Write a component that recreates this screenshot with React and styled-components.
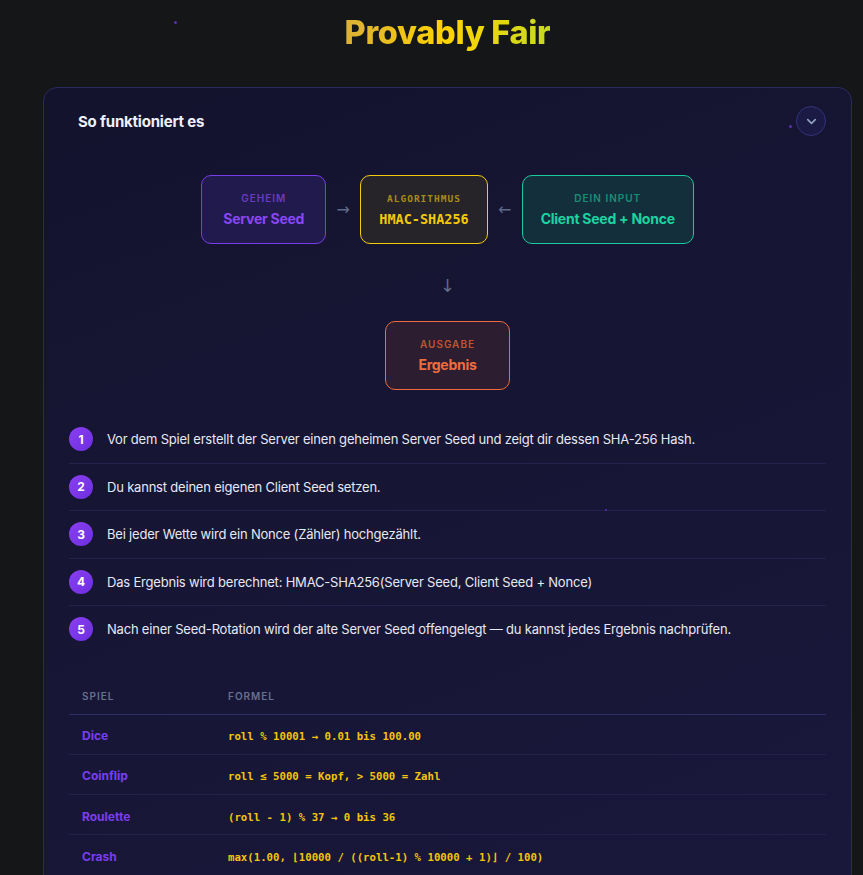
import React from "react";
import styled, { createGlobalStyle } from "styled-components";
import { ChevronDown } from "lucide-react";

const GlobalStyle = createGlobalStyle`
  html, body {
    margin: 0;
    padding: 0;
    background: #151618;
  }
  body {
    font-family: Inter, "Noto Sans", sans-serif;
    color: #e4e6f0;
    -webkit-font-smoothing: antialiased;
  }
  * { box-sizing: border-box; }
`;

const Page = styled.div`
  position: relative;
  min-height: 100vh;
  padding: 0 11px 40px 43px;
`;

const Sparkle = styled.span`
  position: absolute;
  z-index: 2;
  width: ${(p) => p.$size || 3}px;
  height: ${(p) => p.$size || 3}px;
  border-radius: 50%;
  background: #5a2db8;
  pointer-events: none;
`;

const TitleWrap = styled.div`
  display: flex;
  justify-content: center;
  padding: 13px 0 34px;
`;

const Title = styled.h1`
  margin: 0;
  font-size: 32.5px;
  line-height: 40px;
  font-weight: 800;
  letter-spacing: -0.35px;
  background: linear-gradient(90deg, #dbb036 0%, #ffd400 50%, #c6da22 100%);
  -webkit-background-clip: text;
  background-clip: text;
  color: transparent;
`;

const Card = styled.section`
  position: relative;
  border: 1px solid #2b2a5e;
  border-radius: 14px;
  background: linear-gradient(160deg, #14132e 0%, #171636 60%, #19183b 100%);
  padding: 17px 25px 20px 25px;
`;

const Header = styled.div`
  display: flex;
  align-items: center;
  justify-content: space-between;
  padding-left: 9px;
  height: 32px;
`;

const HeaderTitle = styled.h2`
  margin: 0;
  font-size: 15px;
  font-weight: 700;
  color: #eef0fb;
  letter-spacing: -0.2px;
`;

const ToggleButton = styled.button`
  width: 30px;
  height: 30px;
  border-radius: 50%;
  border: 1px solid #34337a;
  background: #1b1a44;
  color: #93a3c2;
  display: flex;
  align-items: center;
  justify-content: center;
  padding: 0;
`;

const Diagram = styled.div`
  display: flex;
  flex-direction: column;
  align-items: center;
  padding-top: 38px;
`;

const FlowRow = styled.div`
  display: flex;
  align-items: center;
  gap: 6px;
`;

const tones = {
  purple: { border: "#7a3bea", bg: "#211a4d", label: "#6a3ac4", value: "#8a47f2" },
  gold: { border: "#f4cb0c", bg: "#262329", label: "#a88c16", value: "#f4c90a" },
  teal: { border: "#1dc9a0", bg: "#132f3b", label: "#178f78", value: "#1ed3a2" },
  orange: { border: "#ef6b3e", bg: "#2c1e30", label: "#c25332", value: "#f26c3b" },
};

const Node = styled.div`
  min-width: ${(p) => p.$w}px;
  height: 69px;
  padding: 0 18px;
  border-radius: 10px;
  border: 1px solid ${(p) => tones[p.$tone].border};
  background: ${(p) => tones[p.$tone].bg};
  display: flex;
  flex-direction: column;
  align-items: center;
  justify-content: center;
  gap: 5px;
`;

const NodeLabel = styled.div`
  font-family: ${(p) => (p.$mono ? '"DejaVu Sans Mono", monospace' : 'Inter, "Noto Sans", sans-serif')};
  font-size: ${(p) => (p.$mono ? "9.5px" : "10px")};
  font-weight: 600;
  letter-spacing: 1px;
  text-transform: uppercase;
  color: ${(p) => tones[p.$tone].label};
  line-height: 13px;
`;

const NodeValue = styled.div`
  font-family: ${(p) => (p.$mono ? '"DejaVu Sans Mono", monospace' : 'Inter, "Noto Sans", sans-serif')};
  font-size: ${(p) => (p.$mono ? "13.5px" : "14px")};
  font-weight: 700;
  letter-spacing: ${(p) => (p.$mono ? "0" : "-0.25px")};
  color: ${(p) => tones[p.$tone].value};
  line-height: 18px;
  white-space: nowrap;
`;

const Arrow = styled.span`
  color: #5d6a88;
  font-size: 16px;
  line-height: 1;
  width: 22px;
  text-align: center;
  font-family: "DejaVu Sans", sans-serif;
`;

const DownArrow = styled(Arrow)`
  padding: 33px 0 26px;
  font-size: 18px;
`;

const Steps = styled.ol`
  list-style: none;
  margin: 26px 0 0;
  padding: 0;
`;

const Step = styled.li`
  display: flex;
  align-items: center;
  gap: 14px;
  height: 47.5px;
  border-bottom: 1px solid ${(p) => (p.$last ? "transparent" : "#23224a")};
`;

const StepNumber = styled.span`
  flex: none;
  width: 24px;
  height: 24px;
  border-radius: 50%;
  background: linear-gradient(135deg, #8a3ff0, #6c2fe0);
  color: #fff;
  font-size: 12px;
  font-weight: 700;
  display: flex;
  align-items: center;
  justify-content: center;
`;

const StepText = styled.span`
  font-size: 13px;
  color: #e6e8f2;
  letter-spacing: -0.2px;
`;

const Table = styled.table`
  width: 100%;
  border-collapse: collapse;
  margin-top: 26px;
`;

const Th = styled.th`
  text-align: left;
  font-size: 10px;
  font-weight: 600;
  letter-spacing: 1px;
  color: #68708e;
  text-transform: uppercase;
  padding: 10px 13px 12px;
  border-bottom: 1px solid #302e66;
  width: ${(p) => p.$w || "auto"};
`;

const Td = styled.td`
  padding: 0 13px;
  height: 40.3px;
  border-bottom: 1px solid #22214a;
`;

const GameName = styled.span`
  font-size: 12px;
  font-weight: 700;
  color: #7b3ef0;
`;

const Formula = styled.code`
  font-family: "DejaVu Sans Mono", monospace;
  font-size: 10.7px;
  font-weight: 700;
  color: #f2c40c;
`;

const steps = [
  "Vor dem Spiel erstellt der Server einen geheimen Server Seed und zeigt dir dessen SHA-256 Hash.",
  "Du kannst deinen eigenen Client Seed setzen.",
  "Bei jeder Wette wird ein Nonce (Zähler) hochgezählt.",
  "Das Ergebnis wird berechnet: HMAC-SHA256(Server Seed, Client Seed + Nonce)",
  "Nach einer Seed-Rotation wird der alte Server Seed offengelegt — du kannst jedes Ergebnis nachprüfen.",
];

const formulas = [
  ["Dice", "roll % 10001 → 0.01 bis 100.00"],
  ["Coinflip", "roll ≤ 5000 = Kopf, > 5000 = Zahl"],
  ["Roulette", "(roll - 1) % 37 → 0 bis 36"],
  ["Crash", "max(1.00, ⌊10000 / ((roll-1) % 10000 + 1)⌋ / 100)"],
];

export default function App() {
  return (
    <>
      <GlobalStyle />
      <Page>
        <TitleWrap>
          <Title>Provably Fair</Title>
        </TitleWrap>
        <Card>
          <Header>
            <HeaderTitle>So funktioniert es</HeaderTitle>
            <ToggleButton aria-label="Einklappen">
              <ChevronDown size={15} strokeWidth={2.5} />
            </ToggleButton>
          </Header>

          <Diagram>
            <FlowRow>
              <Node $tone="purple" $w={125}>
                <NodeLabel $tone="purple">Geheim</NodeLabel>
                <NodeValue $tone="purple">Server Seed</NodeValue>
              </Node>
              <Arrow>→</Arrow>
              <Node $tone="gold" $w={127}>
                <NodeLabel $tone="gold" $mono>Algorithmus</NodeLabel>
                <NodeValue $tone="gold" $mono>HMAC-SHA256</NodeValue>
              </Node>
              <Arrow>←</Arrow>
              <Node $tone="teal" $w={171}>
                <NodeLabel $tone="teal">Dein Input</NodeLabel>
                <NodeValue $tone="teal">Client Seed + Nonce</NodeValue>
              </Node>
            </FlowRow>
            <DownArrow>↓</DownArrow>
            <Node $tone="orange" $w={125}>
              <NodeLabel $tone="orange">Ausgabe</NodeLabel>
              <NodeValue $tone="orange">Ergebnis</NodeValue>
            </Node>
          </Diagram>

          <Steps>
            {steps.map((text, i) => (
              <Step key={i} $last={i === steps.length - 1}>
                <StepNumber>{i + 1}</StepNumber>
                <StepText>{text}</StepText>
              </Step>
            ))}
          </Steps>

          <Table>
            <thead>
              <tr>
                <Th $w="146px">Spiel</Th>
                <Th>Formel</Th>
              </tr>
            </thead>
            <tbody>
              {formulas.map(([game, formula]) => (
                <tr key={game}>
                  <Td>
                    <GameName>{game}</GameName>
                  </Td>
                  <Td>
                    <Formula>{formula}</Formula>
                  </Td>
                </tr>
              ))}
            </tbody>
          </Table>
        </Card>
        <Sparkle style={{ left: 174, top: 21 }} />
        <Sparkle style={{ left: 789, top: 125 }} />
        <Sparkle $size={2} style={{ left: 605, top: 509 }} />
      </Page>
    </>
  );
}
